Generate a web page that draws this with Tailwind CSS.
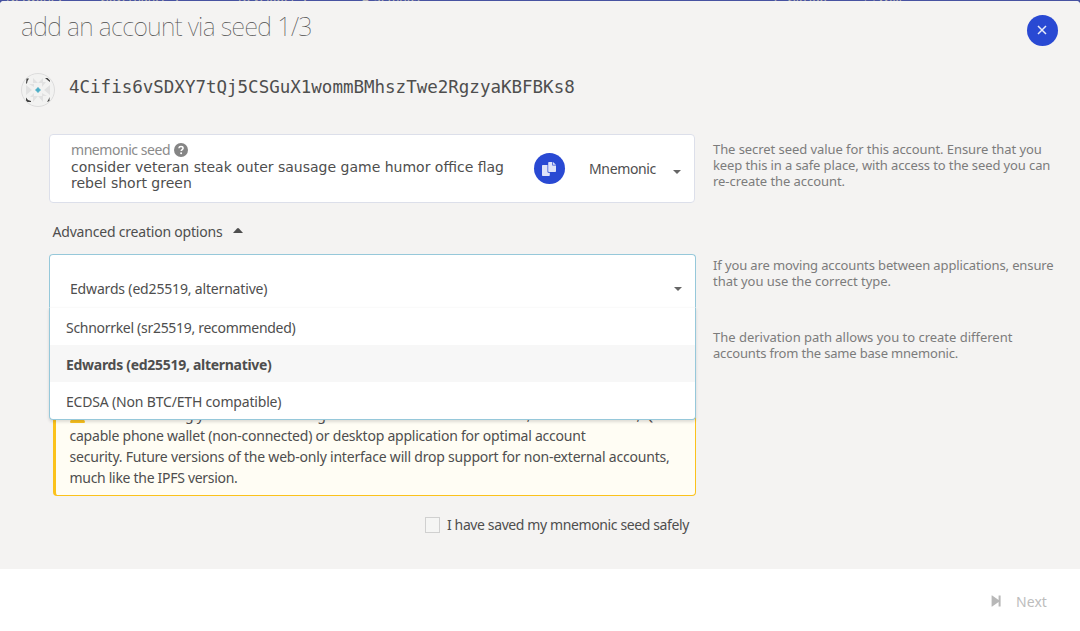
<!DOCTYPE html>
<html lang="en">
<head>
<meta charset="utf-8">
<title>Add an account via seed</title>
<script src="https://cdn.jsdelivr.net/npm/@tailwindcss/browser@4"></script>
</head>
<body class="h-[631px] w-[1080px] overflow-hidden bg-[#4752a1] font-['Noto_Sans','Liberation_Sans',sans-serif] text-[14px] text-[#4e4e4e]">
<!-- Strip of the page behind the dialog -->
<div class="relative h-px overflow-hidden text-[12px] leading-[12px] text-[#b9b6b8]">
  <div class="absolute -top-[8px] left-[6px] flex whitespace-nowrap"><span class="w-[94px]">Network ▾</span><span class="w-[138px]">Governance &nbsp;▾</span><span class="w-[122px]">Developer &nbsp;▾</span><span class="w-[410px]">⚙ Settings</span><span class="w-[94px]">⎇ GitHub</span><span>▤ Wiki</span></div>
</div>
<div class="flex h-[630px] flex-col overflow-hidden rounded-t-[4px] bg-white">
  <main class="h-[568px] bg-[#f4f3f2]">
    <header class="flex h-[58px] items-start justify-between pl-[21px] pr-[22px]">
      <h1 class="mt-[8px] whitespace-nowrap text-[25px] font-[150] leading-[34px] tracking-[-0.6px] text-[#4e4e4e]">add an account via seed 1/3</h1>
      <button class="mt-[14px] flex size-[31px] items-center justify-center rounded-full bg-[#2949d3]" aria-label="Close">
        <svg class="mb-px mr-px" width="10" height="10" viewBox="0 0 10 10" fill="none" stroke="#e9ecfa" stroke-width="1.500"><path d="M1 1l8 8M9 1l-8 8"/></svg>
      </button>
    </header>

    <div class="flex h-[75px] items-start pl-[21px]">
      <svg class="mt-[14px]" width="34" height="34" viewBox="0 0 34 34">
        <circle cx="17" cy="17" r="16.500" fill="#f2f2f1" stroke="#dcdcdc"/>
        <g fill="#e1e1e1"><path d="M12 5l5 5h-5zM22 5v5h-5zM5 12l6 5H5zM5 22v-5h6zM29 12v5h-6zM29 22l-6-5h6zM12 29v-6h5zM22 29l-5-6h5zM8 11h5v3zM21 9h4l-4 5zM9 24l4-4v4zM21 20l5 3h-5z"/></g>
        <g fill="#404040"><path d="M5.500 5.500h2.500L6.500 8l-.5 2.500H5zM24 5h2.500L29 7.500V9l-2-1.500zM5 24.500L7 27l3 1v1H6.500L5 27.500zM28.500 24v4L26 29l1.500-2.500z"/></g>
        <path d="M17 14.300l1.200 1.500 1.500 1.200-1.500 1.200-1.200 1.500-1.200-1.500L14.300 17l1.500-1.200z" fill="#4badc6" stroke="#4badc6" stroke-width=".5"/>
      </svg>
      <div class="ml-[14px] mt-[17px] whitespace-nowrap font-['DejaVu_Sans_Mono',monospace] text-[17.5px] leading-[22px] text-[#4e4e4e]">4Cifis6vSDXY7tQj5CSGuX1wommBMhszTwe2RgzyaKBFBKs8</div>
    </div>

    <div class="flex">
      <section class="ml-[49px] w-[647px] shrink-0">
        <div class="flex h-[69px] w-[646px] rounded-[4px] border border-[#dcdfea] bg-white">
          <div class="w-[484px] pl-[21px] pt-[6px]">
            <div class="flex h-[18px] items-center text-[#8b8b8b]">
              <span class="whitespace-nowrap leading-[18px] tracking-[-0.45px]">mnemonic seed</span>
              <svg class="ml-[4px]" width="14" height="14" viewBox="0 0 14 14"><circle cx="7" cy="7" r="7" fill="#858585"/><path d="M4.900 5.300C5 4.100 5.900 3.500 7 3.500c1.200 0 2.100.7 2.100 1.700C9.100 6.500 7.200 6.600 7.200 8" fill="none" stroke="#fff" stroke-width="1.500"/><circle cx="7.100" cy="10.300" r="1" fill="#fff"/></svg>
            </div>
            <p class="whitespace-nowrap font-['DejaVu_Sans',sans-serif] leading-[16px]">consider veteran steak outer sausage game humor office flag<br>rebel short green</p>
          </div>
          <button class="mt-[18px] flex size-[31px] items-center justify-center rounded-full bg-[#2949d3]" aria-label="Copy">
            <svg class="mr-px" width="14" height="14" viewBox="0 0 14 14" fill="#dfe3f8"><path d="M7 0h3.300v3.400H14v5.800a.8.800 0 0 1-.8.800H7a.8.800 0 0 1-.8-.8V.8A.8.800 0 0 1 7 0z"/><path d="M11 0l3 2.800h-3z"/><path d="M.8 3h4.700v6.700c0 .7.500 1.100 1.200 1.100h1.100v2.400a.8.800 0 0 1-.8.800H.8a.8.800 0 0 1-.8-.8V3.800A.8.800 0 0 1 .8 3z"/></svg>
          </button>
          <div class="flex grow items-center justify-between pl-[24px] pr-[13px]">
            <span class="tracking-[-0.35px]">Mnemonic</span>
            <svg class="mt-[7px]" width="8" height="4" viewBox="0 0 8 4" fill="#666"><path d="M0 0h8L4 4z"/></svg>
          </div>
        </div>

        <div class="flex h-[51px] pl-[3px] pt-[19px]">
          <span class="whitespace-nowrap pl-[0.5px] leading-[19px] tracking-[-0.2px]">Advanced creation options</span>
          <svg class="ml-[10px] mt-[6px]" width="10" height="5" viewBox="0 0 10 5" fill="#4e4e4e"><path d="M0 5L4 .4q1-.8 2 0L10 5z"/></svg>
        </div>

        <div class="relative h-[54px] rounded-t-[4px] border border-b-0 border-[#96c8da] bg-white">
          <div class="flex h-[53px] items-start justify-between pl-[20px] pr-[13px] pt-[24px]">
            <span class="whitespace-nowrap leading-[20px] tracking-[-0.17px]">Edwards (ed25519, alternative)</span>
            <svg class="mt-[8px]" width="8" height="4" viewBox="0 0 8 4" fill="#666"><path d="M0 0h8L4 4z"/></svg>
          </div>
          <!-- Open option list, drawn over the fields below -->
          <ul class="absolute -left-px top-[52px] z-10 w-[647px] whitespace-nowrap rounded-b-[4px] border border-[#96c8da] border-t-[#fafafa] bg-white shadow-[0_2px_3px_rgba(34,36,38,0.15)]">
            <li class="flex h-[37px] items-center pl-[16px] pt-[2px] tracking-[-0.295px]">Schnorrkel (sr25519, recommended)</li>
            <li class="flex h-[37px] items-center bg-[#f7f7f7] pl-[16px] pt-[2px] font-bold tracking-[-0.29px]">Edwards (ed25519, alternative)</li>
            <li class="flex h-[37px] items-center pl-[16px] pt-[2px] tracking-[-0.18px]">ECDSA (Non BTC/ETH compatible)</li>
          </ul>
        </div>

        <div class="ml-[4px] mt-[90px] h-[98px] w-[643px] whitespace-nowrap rounded-[4px] border border-l-[3px] border-[#fbc21c] bg-[#fffdf4] pl-[13.5px] pt-[5px] leading-[21px]">
          <div class="flex h-[21px] items-center tracking-[-0.33px]">
            <svg class="mr-[5px] mt-[2px] shrink-0" width="15" height="14" viewBox="0 0 15 14"><path d="M7.500 0L15 12.500Q15 14 14 14H1Q0 14 0 12.500z" fill="#fbc21c"/></svg>
            <span>Consider storing your account in a signer such as a browser extension, hardware device, QR-</span>
          </div>
          <div class="tracking-[-0.225px]">capable phone wallet (non-connected) or desktop application for optimal account</div>
          <div class="tracking-[-0.21px]">security. Future versions of the web-only interface will drop support for non-external accounts,</div>
          <div class="tracking-[-0.297px]">much like the IPFS version.</div>
        </div>

        <label class="flex h-[58px] items-start justify-end pr-[6px] pt-[19px]">
          <span class="mt-[2px] h-[16px] w-[15px] border border-[#d0d0d0] bg-[#f5f5f4]"></span>
          <span class="ml-[7px] w-[243px] whitespace-nowrap leading-[20px] tracking-[-0.385px]">I have saved my mnemonic seed safely</span>
        </label>
      </section>

      <aside class="ml-[17px] whitespace-nowrap text-[13px] leading-[16px] text-[#7c7c7c]">
        <div class="h-[116px] pt-[7px]">
          <p class="tracking-[-0.07px]">The secret seed value for this account. Ensure that you</p>
          <p class="tracking-[-0.11px]">keep this in a safe place, with access to the seed you can</p>
          <p class="tracking-[-0.06px]">re-create the account.</p>
        </div>
        <div class="h-[72px] pt-[7px]">
          <p class="tracking-[-0.125px]">If you are moving accounts between applications, ensure</p>
          <p class="tracking-[-0.025px]">that you use the correct type.</p>
        </div>
        <div class="pt-[7px]">
          <p class="tracking-[-0.015px]">The derivation path allows you to create different</p>
          <p class="tracking-[-0.18px]">accounts from the same base mnemonic.</p>
        </div>
      </aside>
    </div>
  </main>
  <footer class="flex h-[62px] items-start justify-end bg-white pr-[33px] pt-[22px] text-[#bdbdbd]">
    <svg class="mt-[4px]" width="10" height="12" viewBox="0 0 10 12" fill="#b8b8b8"><path d="M.6.700Q.6 0 1.200.4L7.600 5V.500H9.600v11H7.600V7L1.200 11.600Q.6 12 .6 11.300z"/></svg>
    <span class="ml-[15px] mt-px w-[31px] leading-[20px] tracking-[0.07px]">Next</span>
  </footer>
</div>
</body>
</html>
